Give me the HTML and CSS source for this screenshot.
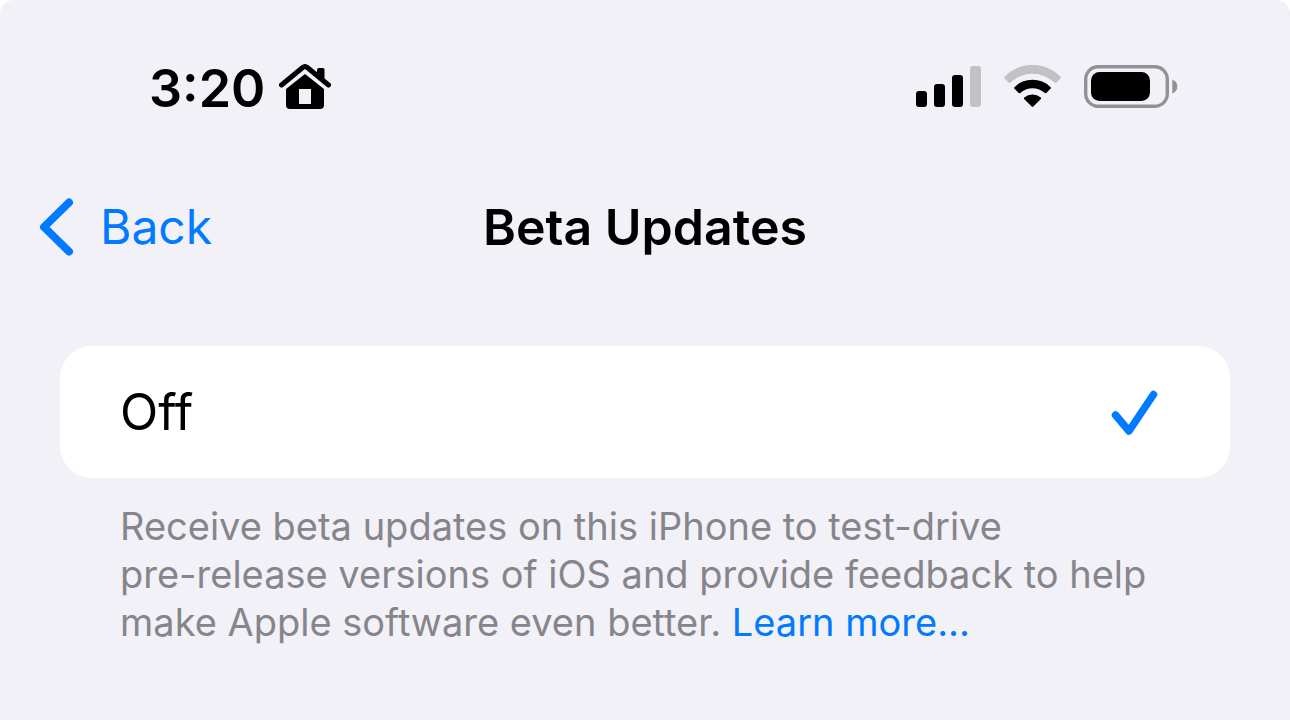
FILE: index.html
```html
<!DOCTYPE html>
<html lang="en">
<head>
<meta charset="utf-8">
<meta name="viewport" content="width=device-width, initial-scale=1">
<title>Beta Updates</title>
<link rel="stylesheet" href="styles.css">
</head>
<body>
<div class="screen">
  <header class="status">
    <div class="status-left">
      <time class="clock">3:20</time>
      <svg class="house" viewBox="0 0 52 46" width="52" height="46" aria-hidden="true">
        <path d="M2.500 21L24 3.300Q26 1.800 28 3.300L49.500 21" fill="none" stroke="#000" stroke-width="5" stroke-linecap="round" stroke-linejoin="round"/>
        <path d="M40 4h4q1.500 0 1.500 1.500V18L38 12V5.500Q38 4 40 4z"/>
        <path fill-rule="evenodd" d="M26 10L45 25v16q0 4-4 4H11q-4 0-4-4V25zM20 25v15h12V25z"/>
      </svg>
    </div>
    <div class="status-right">
      <svg class="signal" viewBox="0 0 66 42" width="66" height="42" aria-hidden="true">
        <rect x="0" y="25" width="11" height="16" rx="3"/>
        <rect x="18" y="18" width="11" height="23" rx="3"/>
        <rect x="36" y="9" width="11" height="32" rx="3"/>
        <rect x="54" y="0" width="11" height="41" rx="3" fill="#c2c1c6"/>
      </svg>
      <svg class="wifi" viewBox="0 0 58 44" width="58" height="44" aria-hidden="true">
        <path d="M0.400 13.200Q-0.300 12.500 0.400 11.800A39 39 0 0 1 56.600 11.800Q57.300 12.500 56.600 13.200L52.300 17.700Q51.600 18.400 50.800 17.700A32.500 32.500 0 0 0 6.200 17.700Q5.400 18.400 4.700 17.700z" fill="#c2c1c6"/>
        <path d="M10.300 23.600Q9.700 22.900 10.400 22.200A25.500 25.500 0 0 1 46.600 22.200Q47.300 22.900 46.700 23.600L42.300 28Q41.600 28.700 40.800 28A18.500 18.500 0 0 0 16.200 28Q15.400 28.700 14.700 28z"/>
        <path d="M20.100 33.900Q19.500 33.200 20.200 32.500A13 13 0 0 1 36.800 32.500Q37.500 33.200 36.900 33.900L29.300 41.600Q28.500 42.400 27.700 41.600z"/>
      </svg>
      <svg class="battery" viewBox="0 0 94 44" width="94" height="44" aria-hidden="true">
        <rect x="1.700" y="1.700" width="81.600" height="39.600" rx="12.500" fill="none" stroke="#929196" stroke-width="3.400"/>
        <rect x="7" y="7" width="59" height="29" rx="8.500"/>
        <path d="M88.300 14.500q5 2 5 7t-5 7z" fill="#929196"/>
      </svg>
    </div>
  </header>
  <nav class="nav">
    <button class="back" type="button">
      <svg viewBox="0 0 36 60" width="36" height="60" aria-hidden="true"><path d="M31 5.500L6 30L31 54.500" fill="none" stroke="currentColor" stroke-width="8" stroke-linecap="round" stroke-linejoin="round"/></svg>
      <span>Back</span>
    </button>
    <h1 class="title">Beta Updates</h1>
  </nav>
  <main class="content">
    <button class="option" type="button" aria-pressed="true">
      <span>Off</span>
      <svg viewBox="0 0 48 48" width="48" height="48" aria-hidden="true"><path d="M5.500 27L19 43L43.500 6.500" fill="none" stroke="#007aff" stroke-width="7.500" stroke-linecap="round" stroke-linejoin="round"/></svg>
    </button>
    <p class="note">Receive beta updates on this iPhone to test-drive <br>pre-release versions of iOS and provide feedback to help make Apple software even better. <a href="#">Learn more...</a></p>
  </main>
</div>
</body>
</html>
```
FILE: styles.css
```css
* { box-sizing: border-box; }
body { margin: 0; background: #fff; font-family: Inter, "Liberation Sans", sans-serif; color: #000; }
.screen { min-height: 100vh; background: #f2f1f7; border-radius: 14px 14px 0 0; padding-top: 55px; }
.status { display: flex; justify-content: space-between; align-items: center; height: 64px; padding: 0 112px 0 149px; }
.status-left { display: flex; align-items: center; gap: 14px; }
.status-right { display: flex; align-items: center; gap: 22px; }
.clock { padding-top: 4px; font-size: 52px; line-height: 60px; font-weight: 600; }
.nav { display: grid; grid-template-columns: 1fr auto 1fr; align-items: center; margin-top: 77px; padding: 0 38px; height: 62px; }
.back { display: flex; align-items: center; justify-self: start; gap: 26px; padding: 0; border: 0; background: none; color: #007aff; font: inherit; font-size: 48px; line-height: 62px; }
.title { margin: 0; font-size: 50px; line-height: 62px; font-weight: 600; }
.content { padding: 88px 60px 0; }
.option { display: flex; align-items: center; justify-content: space-between; width: 100%; height: 132px; padding: 0 72px 0 60px; border: 0; border-radius: 32px; background: #fff; color: #000; font: inherit; font-size: 50px; }
.note { margin: 0; padding: 24px 0 0 60px; color: #86858b; font-size: 38px; line-height: 48px; }
.note a { color: #007aff; text-decoration: none; }
```
